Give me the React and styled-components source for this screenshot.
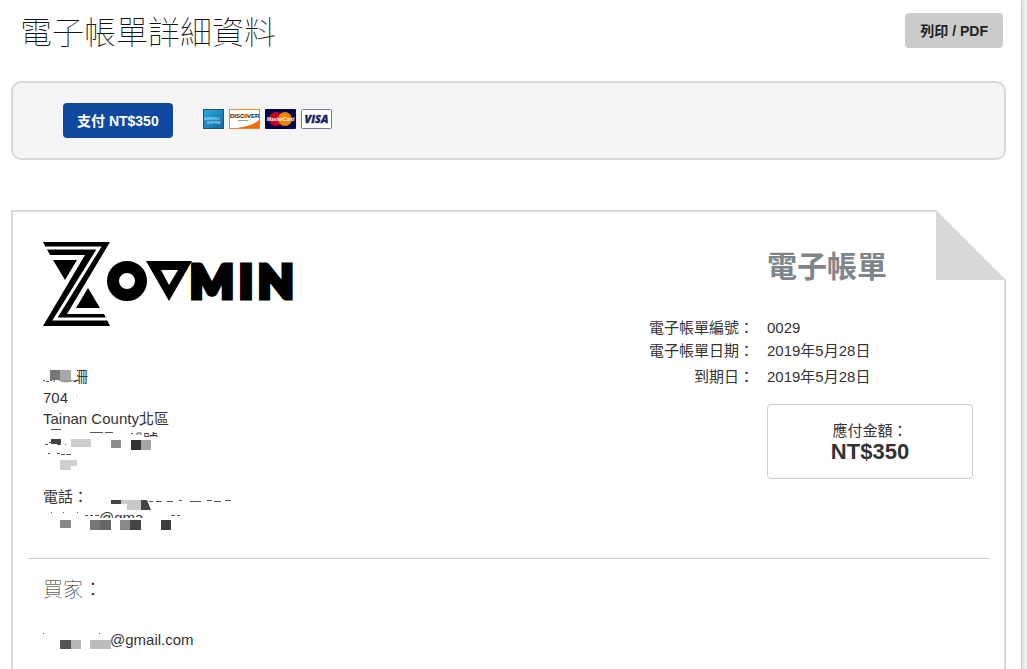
import React from "react";
import styled, { createGlobalStyle } from "styled-components";

const GlobalStyle = createGlobalStyle`
  * { box-sizing: border-box; }
  body {
    margin: 0;
    background: #f3f3f3;
    color: #333;
    font: 15px/21px "Liberation Sans", "Noto Sans CJK TC", sans-serif;
  }
`;

const Page = styled.div`
  min-height: 100vh;
  margin-right: 5px;
  padding: 11px 15px 0 11px;
  background: #fff;
  border-right: 1px solid #d2d2d2;
  box-shadow: 0 0 4px rgba(0, 0, 0, 0.2);
  overflow: hidden;
`;

const Header = styled.header`
  display: flex;
  justify-content: space-between;
  align-items: flex-start;
  padding: 2px 3px 0 9px;
`;

const Title = styled.h1`
  margin: 0;
  color: #111;
  font-size: 32px;
  line-height: 40px;
  font-weight: 100;
`;

const Button = styled.button`
  height: 35px;
  padding: 0 14px 1px;
  border: 0;
  border-radius: 4px;
  font-family: inherit;
  font-size: 14px;
  font-weight: bold;
  white-space: nowrap;
  color: ${(p) => (p.$primary ? "#fff" : "#222")};
  background: ${(p) => (p.$primary ? "#1149a0" : "#cbcbcb")};
`;

const PrintButton = styled(Button)`
  padding: 0 15px 1px;
`;

const PayPanel = styled.section`
  display: flex;
  align-items: center;
  gap: 30px;
  height: 79px;
  margin-top: 28px;
  padding: 0 50px;
  background: #f4f4f4;
  border: 2px solid #d8d8d8;
  border-radius: 10px;
`;

const Cards = styled.div`
  display: flex;
  gap: 5px;
  padding-bottom: 4px;
  svg { display: block; }
`;

const Invoice = styled.main`
  position: relative;
  margin-top: 50px;
  padding: 30px 15px;
  border: 2px solid #d8d8d8;
  border-bottom: 0;
  min-height: 470px;
`;

const Fold = styled.svg`
  position: absolute;
  top: -2px;
  right: -2px;
`;

const Top = styled.div`
  display: flex;
  justify-content: space-between;
  padding: 0 16px 30px 15px;
  border-bottom: 1px solid #ccc;
`;

const Logo = styled.svg`
  display: block;
  margin-bottom: 40px;
  overflow: visible;
`;

const Lines = styled.address`
  font-style: normal;
  & + & { margin-top: 15px; }
`;

const Line = styled.div`
  position: relative;
  height: 21px;
  white-space: nowrap;
`;

const Indented = styled.span`
  display: block;
  padding-left: ${(p) => p.$indent}px;
`;

const Mask = styled.svg`
  position: absolute;
  left: 0;
  top: 0;
`;

const Summary = styled.div`
  display: flex;
  flex-direction: column;
`;

const SummaryTitle = styled.h2`
  margin: 0 0 24px 118px;
  color: #7e868b;
  font-size: 30px;
  line-height: 50px;
  font-weight: bold;
`;

const Details = styled.dl`
  display: grid;
  grid-template-columns: 105px 206px;
  column-gap: 13px;
  margin: 0 0 16px;
  line-height: 23px;
  dt { text-align: right; }
  dd { margin: 0; }
  dt:last-of-type, dd:last-of-type { padding-top: 3px; }
`;

const Due = styled.div`
  align-self: flex-end;
  width: 206px;
  padding: 15px 0;
  border: 1px solid #ccc;
  border-radius: 4px;
  text-align: center;
  strong {
    display: block;
    font-size: 22px;
    line-height: 22px;
  }
`;

const Buyer = styled.section`
  padding: 17px 15px;
  h3 {
    margin: 0 0 27px;
    color: #222;
    font-family: "Noto Sans CJK TC", sans-serif;
    font-size: 20px;
    line-height: 26px;
    font-weight: 100;
  }
`;

function Redaction({ width = 200, blocks = [], marks = "", children }) {
  return (
    <Mask width={width} height="25" aria-hidden="true">
      {children}
      {blocks.map(([x, y, w, h, fill]) => (
        <rect key={`${x}-${y}`} x={x} y={y} width={w} height={h} fill={fill} />
      ))}
      <path d={marks} stroke="#555" fill="none" />
    </Mask>
  );
}

function BrandLogo() {
  return (
    <Logo width="250" height="84" viewBox="0 0 250 84" role="img" aria-label="Zovmin">
      <path d="M0 0H67L24 72H61L67 84H0L42 13H7Z M10 18H34L22 38Z M57 66H33L45 46Z" />
      <path d="M3 6H56L12 77H64" fill="none" stroke="#fff" strokeWidth="3" />
      <circle cx="84" cy="39" r="14" fill="none" stroke="#000" strokeWidth="12" />
      <path fillRule="evenodd" d="M103 19H149L126 59Z M118 28L126 43L135 28Z" />
      <g fontFamily="Lato" fontWeight="900" fontSize="46" stroke="#000" strokeWidth="5">
        <text x="147" y="56">M</text>
        <text x="196" y="56">I</text>
        <text x="215" y="56">N</text>
      </g>
    </Logo>
  );
}

function CardLogos() {
  return (
    <Cards>
      <svg width="21" height="20" role="img" aria-label="American Express">
        <defs>
          <linearGradient id="amex" x2="1" y2="1">
            <stop stopColor="#27a9e6" />
            <stop offset="1" stopColor="#146a99" />
          </linearGradient>
        </defs>
        <rect x=".5" y=".5" width="20" height="19" fill="url(#amex)" stroke="#25546d" />
        <g fill="#9bd3ee" fontFamily="Liberation Sans" fontWeight="bold" fontSize="4">
          <text x="1" y="11">AMERIC</text>
          <text x="4" y="15">EXPRE</text>
        </g>
      </svg>
      <svg width="31" height="20" role="img" aria-label="Discover">
        <rect x=".5" y=".5" width="30" height="19" fill="#fff" stroke="#ef8434" />
        <path d="M30 11V19H8C18 18 26 15 30 11Z" fill="#ec6b08" />
        <g fontFamily="Liberation Sans" fontWeight="bold" fill="#222">
          <text x="1" y="9" fontSize="6">DISC</text>
          <circle cx="16.500" cy="7" r="2.300" fill="#f08a35" />
          <text x="18" y="9" fontSize="6">VER</text>
          <text x="9" y="12" fontSize="2">NETWORK</text>
        </g>
      </svg>
      <svg width="31" height="20" role="img" aria-label="MasterCard">
        <rect width="31" height="20" rx="1" fill="#06064b" />
        <circle cx="11" cy="10" r="7" fill="#c3061f" />
        <circle cx="20" cy="10" r="7" fill="#ef8208" />
        <text x="15.500" y="12" textAnchor="middle" fontFamily="Liberation Sans" fontWeight="bold" fontStyle="italic" fontSize="5" fill="#fff">MasterCard</text>
      </svg>
      <svg width="31" height="20" role="img" aria-label="Visa">
        <rect x=".5" y=".5" width="30" height="19" rx="1" fill="#fff" stroke="#747a94" />
        <text x="15.500" y="14" textAnchor="middle" fontFamily="Open Sans" fontWeight="800" fontStyle="italic" fontSize="11" fill="#1c2264" stroke="#1c2264" strokeWidth=".3">VISA</text>
      </svg>
    </Cards>
  );
}

export default function App() {
  return (
    <>
      <GlobalStyle />
      <Page>
        <Header>
          <Title>電子帳單詳細資料</Title>
          <PrintButton type="button">列印 / PDF</PrintButton>
        </Header>

        <PayPanel>
          <Button type="button" $primary>支付 NT$350</Button>
          <CardLogos />
        </PayPanel>

        <Invoice>
          <Fold width="70" height="70" aria-hidden="true">
            <path d="M0 0H70V70Z" fill="#fff" />
            <path d="M0 0L70 70H0Z" fill="#d8d8d8" />
          </Fold>

          <Top>
            <div>
              <BrandLogo />
              <Lines>
                <Line>
                  <Indented $indent={30}>珊</Indented>
                  <Redaction
                    blocks={[[7, 4, 10, 10, "#777"], [17, 4, 11, 10, "#a8a8a8"]]}
                    marks="M0 14.500H2M3 15.500H6M7 14.500H9M11 13V16"
                  >
                    <path d="M28 0H34V14H28Z" fill="#fff" />
                    <path d="M15 14H32Q23 19 15 14" fill="#999" />
                  </Redaction>
                </Line>
                <Line>704</Line>
                <Line>Tainan County北區</Line>
                <Line>
                  <Indented $indent={100}>號</Indented>
                  <Redaction
                    blocks={[
                      [8, 10, 10, 5, "#444"],
                      [28, 10, 20, 8, "#ccc"],
                      [68, 11, 10, 8, "#8c8c8c"],
                      [88, 11, 10, 10, "#333"],
                      [98, 11, 10, 10, "#a5a5a5"],
                    ]}
                    marks="M8 .5H18M47 3.500H60M62 3.500H70M88 4.500H90M94 6V4H98V6M2 15.500H5M6 13.500H9M14 15.500H18M22 15.500H23"
                  >
                    <rect x="90" y="8" width="40" height="17" fill="#fff" />
                  </Redaction>
                </Line>
                <Line>
                  <Redaction
                    blocks={[[17, 10, 11, 10, "#d0d0d0"], [28, 10, 6, 6, "#d0d0d0"]]}
                    marks="M5 3.500H7M14 3.500H17M18 4.500H22M23 4.500H28"
                  />
                </Line>
              </Lines>
              <Lines>
                <Line>
                  電話：
                  <Redaction
                    blocks={[
                      [68, 14, 10, 4, "#444"],
                      [78, 14, 20, 4, "#c8c8c8"],
                      [84, 18, 14, 6, "#c8c8c8"],
                    ]}
                    marks="M106 15.500H110M113 15.500H119M124 15.500H130M136 14.500H139M147 15.500H158M164 14.500H169M171 15.500H178M182 14.500H188"
                  >
                    <path d="M98 14H104L108 24H98Z" fill="#444" />
                  </Redaction>
                </Line>
                <Line>
                  <Indented $indent={56}>@gma</Indented>
                  <Redaction
                    blocks={[
                      [17, 13, 11, 8, "#888"],
                      [47, 13, 10, 10, "#777"],
                      [57, 13, 11, 10, "#666"],
                      [77, 13, 10, 10, "#888"],
                      [87, 13, 11, 10, "#444"],
                      [118, 13, 10, 10, "#3c3c3c"],
                    ]}
                    marks="M8 5.500H9M20 5.500H21M34 5.500H35M42 8.500H45M47 8.500H50M52 8.500H56M128 8.500H132M134 8.500H137"
                  >
                    <rect x="50" y="11" width="60" height="14" fill="#fff" />
                  </Redaction>
                </Line>
              </Lines>
            </div>

            <Summary>
              <SummaryTitle>電子帳單</SummaryTitle>
              <Details>
                <dt>電子帳單編號：</dt>
                <dd>0029</dd>
                <dt>電子帳單日期：</dt>
                <dd>2019年5月28日</dd>
                <dt>到期日：</dt>
                <dd>2019年5月28日</dd>
              </Details>
              <Due>
                應付金額：
                <strong>NT$350</strong>
              </Due>
            </Summary>
          </Top>

          <Buyer>
            <h3>買家：</h3>
            <Line>
              <Indented $indent={67}>@gmail.com</Indented>
              <Redaction
                blocks={[[17, 11, 11, 9, "#555"], [28, 11, 10, 9, "#b8b8b8"], [47, 11, 21, 9, "#bbb"]]}
                marks="M0 4.500H1M56 4.500H57"
              />
            </Line>
          </Buyer>
        </Invoice>
      </Page>
    </>
  );
}
